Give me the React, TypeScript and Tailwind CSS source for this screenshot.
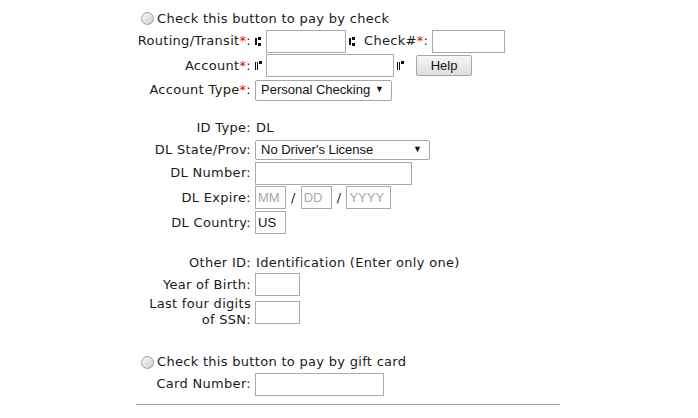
import React from 'react'

const Transit = () => (
    <svg width="7" height="9" viewBox="0 0 7 9" className="shrink-0">
        <rect x="0" y="1" width="2" height="7" fill="#111" />
        <rect x="3" y="0" width="3" height="3" fill="#111" />
        <rect x="3" y="6" width="3" height="3" fill="#111" />
    </svg>
)

const OnUs = () => (
    <svg width="8" height="9" viewBox="0 0 8 9" className="shrink-0">
        <rect x="0" y="1" width="1" height="8" fill="#111" />
        <rect x="2" y="1" width="1" height="8" fill="#111" />
        <rect x="4" y="0" width="3" height="3" fill="#111" />
    </svg>
)

const Radio = () => (
    <span className="inline-block w-[13px] h-[13px] rounded-full border border-[#a0a0a0] bg-gradient-to-br from-[#fafafa] to-[#cfcfcf] shrink-0" />
)

const Req = () => <span className="text-[#e00000]">*</span>

type RowProps = {
    label: React.ReactNode;
    h: string;
    children?: React.ReactNode;
}

const Row = ({label, h, children}: RowProps) => (
    <div className={`flex items-center ${h}`}>
        <div className="w-[119px] pr-[4px] text-right leading-[16px] shrink-0 whitespace-nowrap">{label}</div>
        <div className="flex items-center">{children}</div>
    </div>
)

const Input = ({w, placeholder, value}: {w: string; placeholder?: string; value?: string}) => (
    <div className={`${w} h-[23px] border border-[#a9a9a9] bg-white flex items-center px-[2px] font-['Liberation_Sans',Arial,sans-serif] text-[13px] tracking-normal`}>
        {value ? <span className="text-[#111]">{value}</span> : <span className="text-[#a8a8a8]">{placeholder}</span>}
    </div>
)

const Select = ({w, h, text}: {w: string; h: string; text: string}) => (
    <div className={`${w} ${h} border border-[#a6a6a6] rounded-[2px] bg-white flex items-center justify-between pl-[5px] pr-[7px] font-['Liberation_Sans',Arial,sans-serif] text-[13px] tracking-normal text-[#111]`}>
        <span>{text}</span>
        <span className="text-[9px]">▼</span>
    </div>
)

export default function App() {
    return (
        <div className="w-[698px] h-[418px] bg-white overflow-hidden font-['DejaVu_Sans',Verdana,sans-serif] text-[13px] tracking-[0.3px] text-[#1a1a1a]">
            <div className="w-[424px] ml-[136px] pt-[8px] flex flex-col">
                {/* pay by check */}
                <div className="flex items-center h-[21px] pl-[5px] gap-[3px]">
                    <Radio />
                    <span>Check this button to pay by check</span>
                </div>
                <Row h="h-[24px]" label={<>Routing/Transit<Req />:</>}>
                    <Transit />
                    <div className="ml-[4px]"><Input w="w-[80px]" /></div>
                    <div className="ml-[3px]"><Transit /></div>
                    <span className="ml-[8px]">Check#<Req />:</span>
                    <div className="ml-[4px]"><Input w="w-[73px]" /></div>
                </Row>
                <Row h="h-[25px]" label={<>Account<Req />:</>}>
                    <OnUs />
                    <div className="ml-[3px]"><Input w="w-[128px]" /></div>
                    <div className="ml-[3px]"><OnUs /></div>
                    <button className="ml-[11px] w-[56px] h-[21px] border border-[#a6a6a6] rounded-[2px] bg-gradient-to-b from-[#f6f6f6] to-[#dedede] font-['Liberation_Sans',Arial,sans-serif] text-[13px] tracking-normal text-[#111]">Help</button>
                </Row>
                <Row h="h-[24px]" label={<>Account Type<Req />:</>}>
                    <Select w="w-[137px]" h="h-[21px]" text="Personal Checking" />
                </Row>

                {/* ID section */}
                <div className="h-[16px]" />
                <Row h="h-[20px]" label="ID Type:">
                    <span className="ml-[1px]">DL</span>
                </Row>
                <Row h="h-[23px]" label="DL State/Prov:">
                    <Select w="w-[175px]" h="h-[20px]" text="No Driver's License" />
                </Row>
                <Row h="h-[24px]" label="DL Number:">
                    <Input w="w-[157px]" />
                </Row>
                <Row h="h-[25px]" label="DL Expire:">
                    <Input w="w-[31px]" placeholder="MM" />
                    <span className="mx-[5px]">/</span>
                    <Input w="w-[31px]" placeholder="DD" />
                    <span className="mx-[5px]">/</span>
                    <Input w="w-[45px]" placeholder="YYYY" />
                </Row>
                <Row h="h-[25px]" label="DL Country:">
                    <Input w="w-[31px]" value="US" />
                </Row>

                <div className="h-[18px]" />
                <Row h="h-[20px]" label="Other ID:">
                    <span className="ml-[1px]">Identification (Enter only one)</span>
                </Row>
                <Row h="h-[23px]" label="Year of Birth:">
                    <Input w="w-[45px]" />
                </Row>
                <Row h="h-[32px]" label={<>Last four digits<br />of SSN:</>}>
                    <Input w="w-[45px]" />
                </Row>

                {/* gift card */}
                <div className="h-[24px]" />
                <div className="flex items-center h-[20px] pl-[5px] gap-[3px]">
                    <Radio />
                    <span>Check this button to pay by gift card</span>
                </div>
                <Row h="h-[24px]" label="Card Number:">
                    <Input w="w-[129px]" />
                </Row>
                <div className="mt-[8px] border-t border-[#a0a0a0]" />
            </div>
        </div>
    )
}
